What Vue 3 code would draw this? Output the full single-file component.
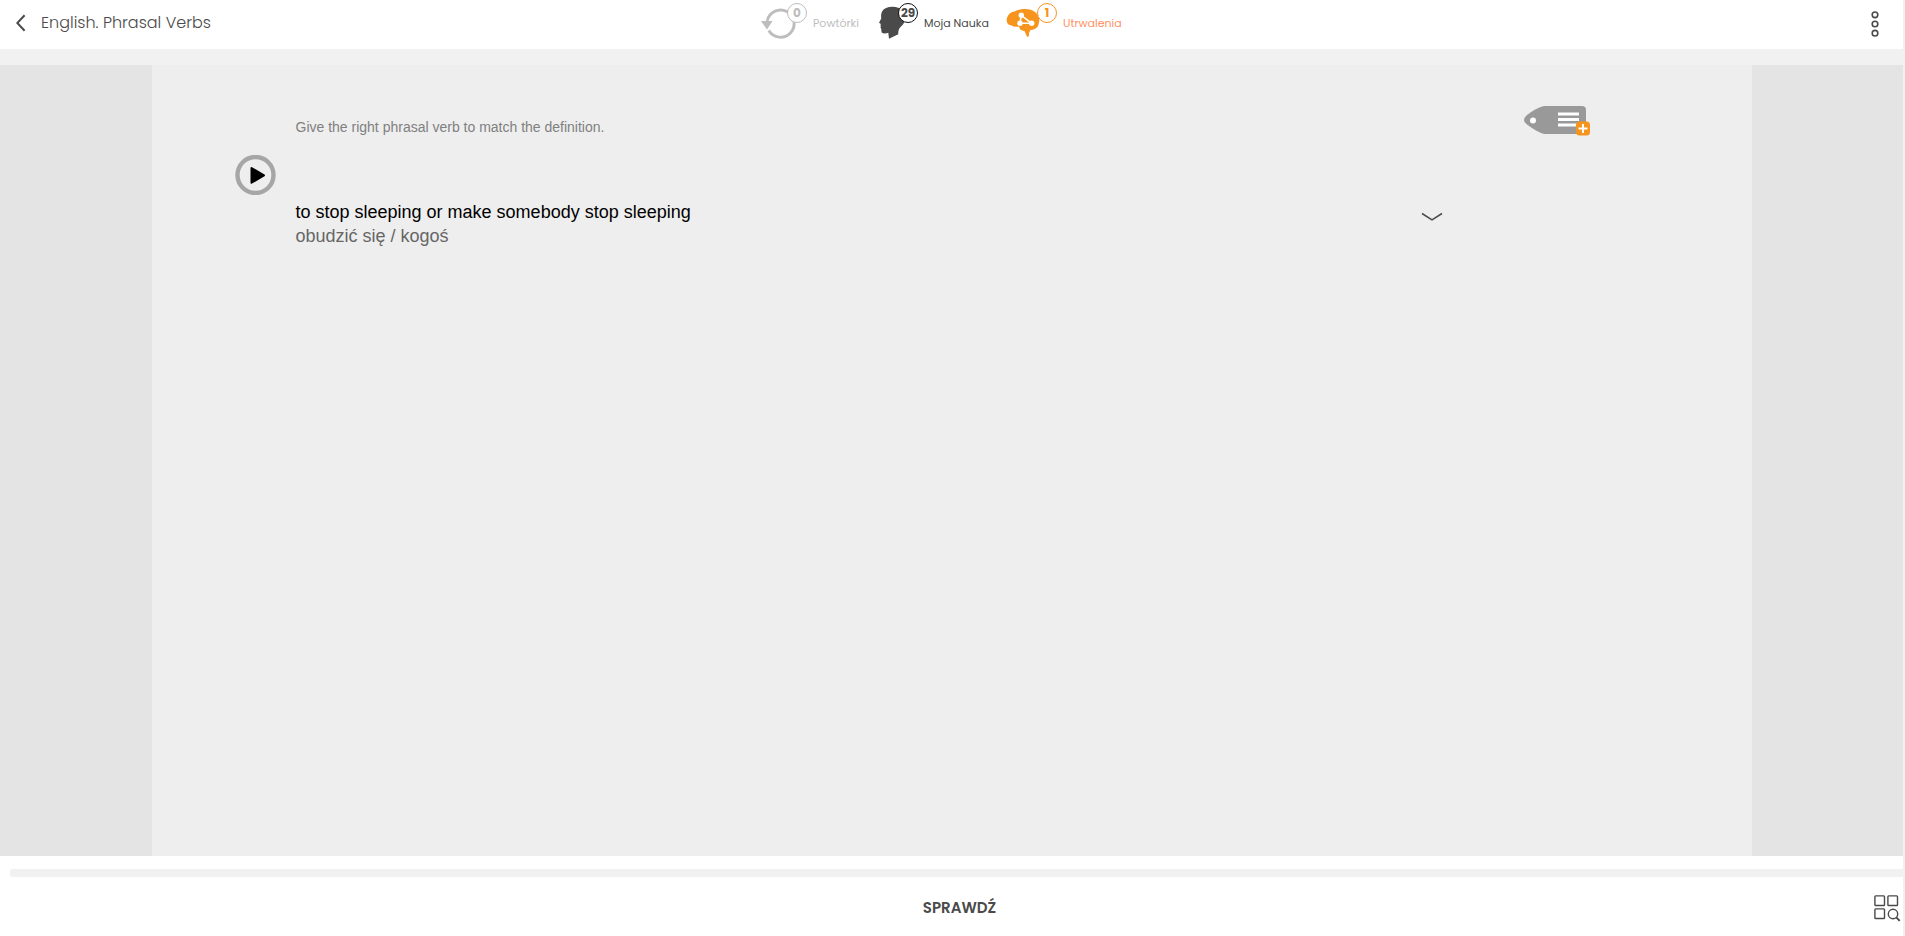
<script setup>
import { ref, reactive } from 'vue'

const courseName = 'English. Phrasal Verbs'
const counters = reactive([
  { name: 'repeats', label: 'Powtórki', count: 0 },
  { name: 'learning', label: 'Moja Nauka', count: 29 },
  { name: 'known', label: 'Utrwalenia', count: 1 },
])

const card = {
  instruction: 'Give the right phrasal verb to match the definition.',
  question: 'to stop sleeping or make somebody stop sleeping',
  translation: 'obudzić się / kogoś',
}

const showTranslation = ref(true)
const toggleTranslation = () => {
  showTranslation.value = !showTranslation.value
}
</script>

<template>
  <div class="page">
    <header class="header">
      <a class="back" href="#">
        <svg width="10" height="18" viewBox="0 0 10 18" aria-hidden="true">
          <path d="M8.6 1.2L1.3 9L8.6 16.8" fill="none" stroke="#4a4a4a" stroke-width="2" />
        </svg>
        <span>{{ courseName }}</span>
      </a>
      <div class="counters">
        <div v-for="item in counters" :key="item.name" class="counter" :class="item.name">
          <div class="icon">
            <svg v-if="item.name === 'repeats'" width="46" height="40" viewBox="0 0 46 40" aria-hidden="true">
              <path d="M6.2 18A13.6 13.6 0 1 1 7.8 27.5" fill="none" stroke="#bdbdbd" stroke-width="2.9" />
              <path d="M0 18H11.5L6 26.5Z" fill="#bdbdbd" />
            </svg>
            <svg v-else-if="item.name === 'learning'" width="39" height="40" viewBox="0 0 39 40" aria-hidden="true">
              <path d="M10 35.7L9.3 29.7Q7 30.8 4 30.3Q2.2 29.8 2.4 28L2.2 25.8L1.4 24.6L1.9 23.2L1.4 22.2L1.9 21L0 19.8L2.2 15.5Q1.2 7.5 7 5Q13 2.3 20 5Q26.5 8 26.3 15Q26 20 22 23.5Q18.8 26.5 19.3 31.3Z" fill="#4a4a4a" />
            </svg>
            <svg v-else width="51" height="40" viewBox="0 0 51 40" aria-hidden="true">
              <path d="M.7 18C.5 13 4 9 9 8.3C15 5 25 5.2 29 9C33 11.5 34 17 32.8 20C32.8 24 29 27 24.5 27L23 30V33.2L21 33.7L18.5 28Q13.5 27.5 13 23.5Q8 24.5 5 22.3Q1.2 22 .7 18Z" fill="#f7941e" />
              <path d="M15.3 12.3L14 20.3H25.7Z" fill="none" stroke="#fff" stroke-width="1.5" />
              <circle cx="15.3" cy="12.3" r="2.7" fill="#fff" />
              <circle cx="14" cy="20.3" r="2.7" fill="#fff" />
              <circle cx="25.7" cy="20.3" r="2.7" fill="#fff" />
            </svg>
            <span class="badge">{{ item.count }}</span>
          </div>
          <span class="label">{{ item.label }}</span>
        </div>
      </div>
      <button class="menu" type="button" aria-label="Menu">
        <svg width="8" height="26" viewBox="0 0 8 26" fill="none" stroke="#4a4a4a" stroke-width="1.6" aria-hidden="true">
          <circle cx="4" cy="3.8" r="2.8" />
          <circle cx="4" cy="13" r="2.8" />
          <circle cx="4" cy="22.2" r="2.8" />
        </svg>
      </button>
    </header>

    <main class="content">
      <section class="card">
        <p class="instruction">{{ card.instruction }}</p>
        <button class="tag" type="button" aria-label="Tag">
          <svg width="66" height="30" viewBox="0 0 66 30" aria-hidden="true">
            <path d="M20 0H58Q62 0 62 4V24Q62 28 58 28H20Q13 26 3 18.5Q-3 14 3 9Q12 2 20 0Z" fill="#999" />
            <circle cx="9" cy="14.5" r="3" fill="#fff" />
            <path d="M34 8H55M34 13.5H55M34 19H55" stroke="#fff" stroke-width="3" />
            <rect x="52" y="15.5" width="14" height="14" rx="3.5" fill="#f7941e" />
            <path d="M59 18V27M54.5 22.5H63.5" stroke="#fff" stroke-width="2" />
          </svg>
        </button>
        <button class="play" type="button" aria-label="Play">
          <svg width="41" height="40" viewBox="0 0 41 40" aria-hidden="true">
            <circle cx="20.5" cy="20" r="18" fill="none" stroke="#a6a6a6" stroke-width="4.4" />
            <path d="M16.5 13L29 20.3L16.5 27.7Z" stroke="#000" stroke-width="2" stroke-linejoin="round" />
          </svg>
        </button>
        <div class="question">
          <div>
            <p>{{ card.question }}</p>
            <p v-if="showTranslation" class="translation">{{ card.translation }}</p>
          </div>
          <button class="toggle" type="button" aria-label="Translation" @click="toggleTranslation">
            <svg width="22" height="10" viewBox="0 0 22 10" aria-hidden="true">
              <path d="M1 1.5L11 7.8L21 1.5" fill="none" stroke="#4a4a4a" stroke-width="1.5" />
            </svg>
          </button>
        </div>
      </section>
    </main>

    <footer class="footer">
      <div class="progress"></div>
      <div class="actions">
        <button class="check" type="button">SPRAWDŹ</button>
        <button class="browse" type="button" aria-label="Browse">
          <svg width="27" height="27" viewBox="0 0 27 27" fill="none" stroke="#4a4a4a" stroke-width="1.4" aria-hidden="true">
            <rect x="0.9" y="0.9" width="9.6" height="9.6" rx="0.8" />
            <rect x="13.9" y="0.9" width="9.6" height="9.6" rx="0.8" />
            <rect x="0.9" y="13.9" width="9.6" height="9.6" rx="0.8" />
            <circle cx="19" cy="19" r="4.7" />
            <path d="M22.3 22.3L25.7 25.9" stroke-width="1.9" />
          </svg>
        </button>
      </div>
    </footer>
  </div>
</template>

<style>
body {
  margin: 0;
  background: #f1f1f1;
}
</style>

<style scoped>
.page {
  display: flex;
  flex-direction: column;
  min-height: 100vh;
  margin-right: 2px;
  font-family: Poppins, Inter, sans-serif;
  color: #4a4a4a;
}

p {
  margin: 0;
}

button {
  display: block;
  padding: 0;
  border: 0;
  background: none;
  color: inherit;
  font-family: inherit;
  cursor: pointer;
}

svg {
  display: block;
}

.header {
  display: grid;
  grid-template-columns: 1fr auto 1fr;
  height: 49px;
  background: #fff;
}

.back {
  display: flex;
  gap: 15px;
  align-items: center;
  height: 46px;
  padding-left: 16px;
  color: inherit;
  font-size: 16px;
  font-weight: 300;
  text-decoration: none;
}

.back span {
  padding-bottom: 2px;
}

.counters {
  display: grid;
  grid-template-columns: 118px 127px 136px;
}

.counter {
  display: flex;
  gap: 6px;
  align-items: center;
  height: 46px;
  font-size: 11px;
}

.icon {
  position: relative;
  height: 40px;
}

.badge {
  position: absolute;
  top: 0;
  right: 0;
  box-sizing: border-box;
  width: 20px;
  height: 20px;
  border: 1px solid currentColor;
  border-radius: 50%;
  background: #fff;
  font-size: 12px;
  font-weight: 700;
  line-height: 18px;
  text-align: center;
}

.repeats {
  color: #bdbdbd;
}

.learning .badge {
  border-color: #111;
}

.known .badge {
  color: #f7941e;
}

.known .label {
  color: #ff9166;
}

.menu {
  justify-self: end;
  height: 48px;
  margin-right: 24px;
}

.content {
  display: flex;
  flex: 1;
  justify-content: center;
  margin-top: 16px;
  background: #e4e4e4;
}

.card {
  display: grid;
  grid-template-columns: 41px 1fr 66px;
  grid-template-rows: 49px 40px 1fr;
  column-gap: 20px;
  box-sizing: border-box;
  width: 100%;
  max-width: 1600px;
  padding: 41px 162px 0 83px;
  background: #eee;
  font-family: "Liberation Sans", Arial, sans-serif;
}

.instruction {
  grid-column: 2;
  padding-top: 11px;
  color: #808080;
  font-size: 14px;
  line-height: 20px;
}

.tag {
  grid-column: 3;
  align-self: start;
}

.play {
  grid-column: 1;
  grid-row: 2;
}

.question {
  display: flex;
  grid-column: 2;
  grid-row: 3;
  justify-content: space-between;
  align-items: flex-start;
  padding: 5px 61px 0 0;
  color: #000;
  font-size: 18px;
  line-height: 24px;
}

.translation {
  color: #666;
}

.toggle {
  margin-top: 12px;
}

.footer {
  box-sizing: border-box;
  height: 80px;
  padding-top: 13px;
  background: #fff;
}

.progress {
  height: 8px;
  margin-left: 10px;
  border-radius: 2px 0 0 2px;
  background: #f1f1f1;
}

.actions {
  display: grid;
  grid-template-columns: 1fr auto 1fr;
  align-items: center;
  padding: 3px 2px 0 18px;
}

.check {
  grid-column: 2;
  font-size: 15px;
  font-weight: 600;
  line-height: 56px;
}

.browse {
  justify-self: end;
}
</style>
